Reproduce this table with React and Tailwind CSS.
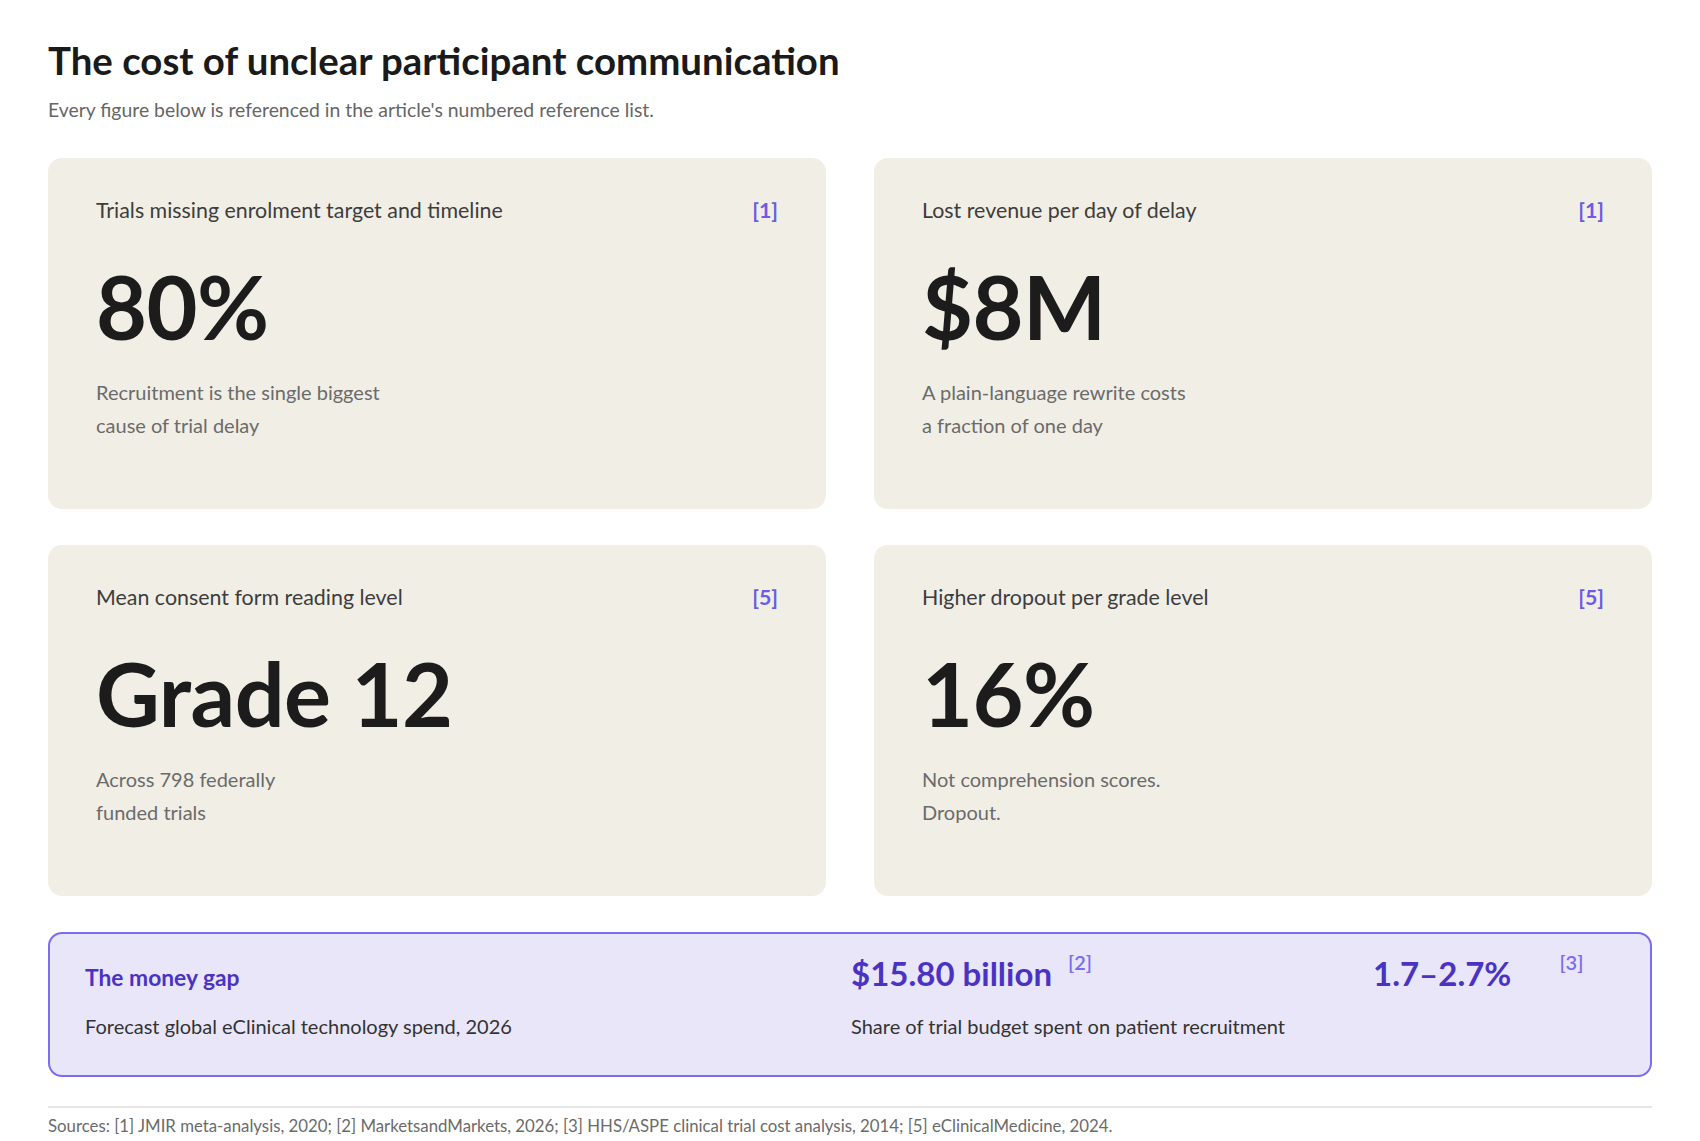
import React from 'react';

const stats = [
    { label: 'Trials missing enrolment target and timeline', ref: '[1]', value: '80%', desc: ['Recruitment is the single biggest', 'cause of trial delay'] },
    { label: 'Lost revenue per day of delay', ref: '[1]', value: '$8M', desc: ['A plain-language rewrite costs', 'a fraction of one day'] },
    { label: 'Mean consent form reading level', ref: '[5]', value: 'Grade 12', desc: ['Across 798 federally', 'funded trials'] },
    { label: 'Higher dropout per grade level', ref: '[5]', value: '16%', desc: ['Not comprehension scores.', 'Dropout.'] },
];

const StatCard = ({ stat }) => (
    <div className="bg-[#f1eee6] rounded-[14px] px-12 pt-10 pb-[67px]">
        <div className="flex items-baseline justify-between">
            <span className="text-[21.4px] leading-[1.2] text-[#3d3d3d]">{stat.label}</span>
            <span className="text-[21.4px] leading-[1.2] font-bold text-[#6e5ae6]">{stat.ref}</span>
        </div>
        <div className="mt-[38px] text-[88px] leading-none font-bold text-[#1c1c1c] tracking-[-0.5px]">{stat.value}</div>
        <p className="mt-[26px] text-[20px] leading-[33px] text-[#6b6b6b]">
            {stat.desc[0]}
            <br />
            {stat.desc[1]}
        </p>
    </div>
);

export default function App() {
    return (
        <div className="min-h-screen bg-white px-12 pt-[37px] font-['Lato',sans-serif]">
            <h1 className="text-[38.4px] leading-[1.2] font-bold text-[#1a1a1a]">The cost of unclear participant communication</h1>
            <p className="mt-[12px] text-[19.4px] leading-[1.5] text-[#666666]">
                Every figure below is referenced in the article's numbered reference list.
            </p>

            <div className="mt-[34px] grid grid-cols-2 gap-x-12 gap-y-9">
                {stats.map((s, i) => (
                    <StatCard key={i} stat={s} />
                ))}
            </div>

            {/* money gap */}
            <div className="mt-9 rounded-[14px] border-2 border-[#7b6cf0] bg-[#e9e6f9] pl-[35px] pr-9 pt-[18px] pb-[34px]">
                <div className="grid grid-cols-[766px_522px_1fr] items-baseline">
                    <h3 className="text-[22.8px] font-bold text-[#4a33c2]">The money gap</h3>
                    <div className="text-[33px] leading-[1.2] font-bold text-[#4a33c2]">
                        $15.80 billion
                        <span className="ml-[16px] align-[16px] text-[20px] leading-none font-semibold text-[#7b6cf0]">[2]</span>
                    </div>
                    <div className="text-[33px] leading-[1.2] font-bold text-[#4a33c2]">
                        1.7–2.7%
                        <span className="ml-[48px] align-[16px] text-[20px] leading-none font-semibold text-[#7b6cf0]">[3]</span>
                    </div>
                </div>
                <div className="mt-[17px] grid grid-cols-[766px_522px_1fr] text-[20px] leading-[1.5] text-[#333333]">
                    <span>Forecast global eClinical technology spend, 2026</span>
                    <span>Share of trial budget spent on patient recruitment</span>
                </div>
            </div>

            <div className="mt-[29px] border-t-2 border-[#e6e6e6] pt-[5px] pb-8 text-[16.8px] leading-[1.5] text-[#6b6b6b]">
                Sources: [1] JMIR meta-analysis, 2020; [2] MarketsandMarkets, 2026; [3] HHS/ASPE clinical trial cost analysis, 2014; [5] eClinicalMedicine, 2024.
            </div>
        </div>
    );
}
